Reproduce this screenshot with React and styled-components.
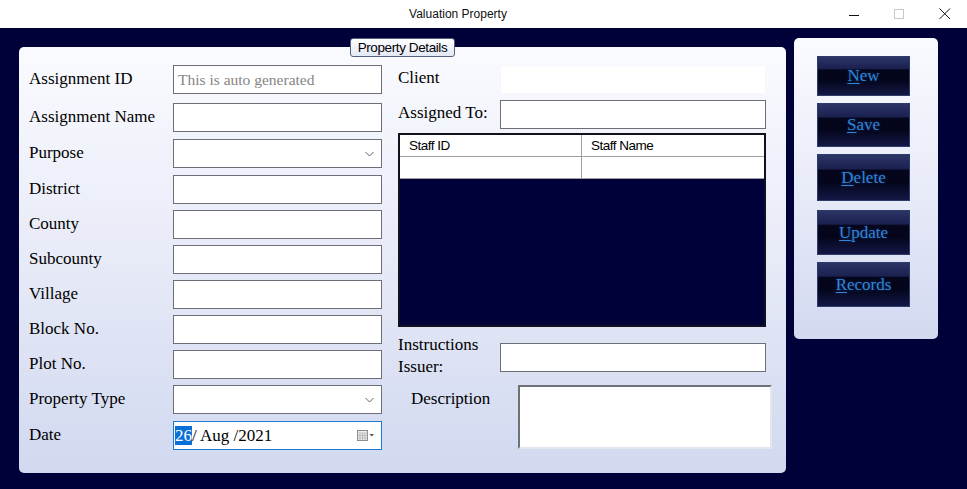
import React from "react";
import styled, { createGlobalStyle } from "styled-components";

const Global = createGlobalStyle`
  html, body { margin: 0; padding: 0; background: #01013a; }
  body { width: 967px; height: 489px; overflow: hidden; }
  * { box-sizing: border-box; }
`;

const serif = `"Liberation Serif", "Times New Roman", serif`;
const sans = `"Liberation Sans", Arial, sans-serif`;

const Window = styled.div`
  width: 967px;
  height: 489px;
  display: flex;
  flex-direction: column;
  background: #01013a;
`;

const TitleBar = styled.div`
  height: 28px;
  background: #ffffff;
  display: flex;
  align-items: center;
`;

const Title = styled.div`
  flex: 1;
  text-align: center;
  padding-left: 84px;
  font-family: ${sans};
  font-size: 12px;
  color: #111;
`;

const Controls = styled.div`
  display: flex;
  height: 28px;
`;

const Ctrl = styled.div`
  width: 45px;
  height: 28px;
  display: flex;
  align-items: center;
  justify-content: center;
`;

const Body = styled.div`
  flex: 1;
  display: flex;
  align-items: flex-start;
  padding: 10px 0 0 19px;
  gap: 8px;
`;

const MainPanel = styled.div`
  position: relative;
  margin-top: 9px;
  width: 767px;
  height: 426px;
  border-radius: 5px;
  background: linear-gradient(180deg, #fafbff 0%, #e9ecf8 45%, #d1d9f0 100%);
  display: flex;
  padding: 18px 0 0 10px;
`;

const Tab = styled.div`
  position: absolute;
  left: 331px;
  top: -9px;
  width: 105px;
  height: 19px;
  border: 1px solid #55607e;
  border-radius: 3px;
  background: linear-gradient(180deg, #ffffff, #e3e8f6);
  font-family: ${sans};
  font-size: 13.5px;
  line-height: 17px;
  text-align: center;
  color: #000;
  letter-spacing: -0.4px;
`;

const LeftCol = styled.div`
  width: 353px;
  display: flex;
  flex-direction: column;
  gap: 6px;
`;

const Row = styled.div`
  display: flex;
  align-items: flex-start;
  margin-top: ${(p) => p.$mt || 0}px;
  margin-bottom: ${(p) => p.$extra || 0}px;
`;

const Label = styled.div`
  width: ${(p) => p.$w || 144}px;
  padding-top: ${(p) => p.$pt ?? 5}px;
  padding-left: ${(p) => p.$pl || 0}px;
  margin-top: ${(p) => p.$mt || 0}px;
  margin-bottom: ${(p) => p.$mb || 0}px;
  font-family: ${serif};
  font-size: 17px;
  line-height: ${(p) => p.$lh || 18}px;
  color: #000;
  flex-shrink: 0;
`;

const Field = styled.div`
  width: ${(p) => p.$w || 209}px;
  height: ${(p) => p.$h || 29}px;
  background: #fff;
  border: 1px solid ${(p) => (p.$focus ? "#1a7ad6" : p.$none ? "#f6f7fb" : "#6e6e78")};
  display: flex;
  align-items: center;
  padding: 0 4px;
  font-family: ${serif};
  font-size: 17px;
  color: #000;
  position: relative;
`;

const Placeholder = styled.span`
  color: #858585;
  font-size: 15.5px;
`;

const Chevron = styled.svg`
  position: absolute;
  right: 7px;
  top: 11px;
`;

const Sel = styled.span`
  background: #0a6fd6;
  color: #fff;
  margin-left: -3px;
`;

const CalIcon = styled.svg`
  position: absolute;
  right: 6px;
  top: 8px;
`;

const RightCol = styled.div`
  margin-left: 16px;
  width: 374px;
  display: flex;
  flex-direction: column;
`;

const Grid = styled.div`
  margin-top: 4px;
  width: 368px;
  height: 194px;
  border: 2px solid #101020;
  background: #01013a;
  display: flex;
  flex-direction: column;
`;

const GridRow = styled.div`
  display: grid;
  grid-template-columns: 182px 1fr;
  height: 22px;
  background: #fff;
  border-bottom: 1px solid #a0a0a0;
`;

const Cell = styled.div`
  border-right: ${(p) => (p.$last ? "none" : "1px solid #a0a0a0")};
  padding-left: 9px;
  font-family: ${sans};
  font-size: 13.5px;
  line-height: 21px;
  letter-spacing: -0.5px;
  color: #000;
`;

const DescBox = styled.div`
  width: 254px;
  height: 64px;
  background: #fff;
  border-top: 2px solid #707078;
  border-left: 2px solid #707078;
  border-right: 2px solid #e4e6ee;
  border-bottom: 2px solid #e4e6ee;
`;

const SidePanel = styled.div`
  width: 144px;
  height: 301px;
  border-radius: 5px;
  background: linear-gradient(180deg, #fafbff 0%, #e8ebf8 50%, #d2d9f0 100%);
  padding: 18px 0 0 23px;
  display: flex;
  flex-direction: column;
`;

const Btn = styled.button`
  width: 93px;
  height: ${(p) => p.$h}px;
  margin-bottom: ${(p) => p.$mb}px;
  border: 1px solid #2d3c6a;
  background: linear-gradient(
    180deg,
    #2c3566 0%,
    #1b2150 30%,
    #05061c 34%,
    #04051a 60%,
    #131845 100%
  );
  color: #3084da;
  font-family: ${serif};
  font-size: 17px;
  font-weight: normal;
  padding: 0;
  display: flex;
  align-items: center;
  justify-content: center;
  cursor: pointer;
  text-shadow: 0 0 3px rgba(40, 110, 200, 0.45);
  u { text-decoration-thickness: 1px; text-underline-offset: 2px; }
`;

const leftRows = [
  ["Assignment ID", "ph", 3],
  ["Assignment Name", "", 1],
  ["Purpose", "select", 1],
  ["District", "", 0],
  ["County", "", 0],
  ["Subcounty", "", 0],
  ["Village", "", 0],
  ["Block No.", "", 0],
  ["Plot No.", "", 0],
  ["Property Type", "select", 1],
];

const buttons = [
  ["N", "ew", 40, 7],
  ["S", "ave", 44, 7],
  ["D", "elete", 47, 9],
  ["U", "pdate", 45, 7],
  ["R", "ecords", 45, 0],
];

const ChevronIcon = () => (
  <Chevron width="9" height="6" viewBox="0 0 9 6">
    <path d="M0.5 1 L4.5 5 L8.5 1" fill="none" stroke="#606068" strokeWidth="1" />
  </Chevron>
);

export default function App() {
  return (
    <>
      <Global />
      <Window>
        <TitleBar>
          <Title>Valuation Property</Title>
          <Controls>
            <Ctrl>
              <svg width="11" height="11" viewBox="0 0 11 11">
                <path d="M0 6.5 H10" stroke="#111" strokeWidth="1" />
              </svg>
            </Ctrl>
            <Ctrl>
              <svg width="11" height="11" viewBox="0 0 11 11">
                <rect x="0.5" y="0.5" width="9" height="9" fill="none" stroke="#c8c8c8" />
              </svg>
            </Ctrl>
            <Ctrl>
              <svg width="12" height="12" viewBox="0 0 12 12">
                <path d="M0.5 0.5 L11 11 M11 0.5 L0.5 11" stroke="#111" strokeWidth="1" />
              </svg>
            </Ctrl>
          </Controls>
        </TitleBar>
        <Body>
          <MainPanel>
            <Tab>Property Details</Tab>
            <LeftCol>
              {leftRows.map(([label, kind, extra]) => (
                <Row key={label} $extra={extra}>
                  <Label>{label}</Label>
                  <Field>
                    {kind === "ph" && <Placeholder>This is auto generated</Placeholder>}
                    {kind === "select" && <ChevronIcon />}
                  </Field>
                </Row>
              ))}
              <Row>
                <Label>Date</Label>
                <Field $focus>
                  <span>
                    <Sel>26</Sel>/ Aug /2021
                  </span>
                  <CalIcon width="18" height="11" viewBox="0 0 18 11">
                    <rect x="0.5" y="0.5" width="10" height="10" fill="#eee" stroke="#8a8a8a" />
                    <path d="M0.5 3 H10.5 M3 3 V10.5 M5.5 3 V10.5 M8 3 V10.5 M0.5 5.5 H10.5 M0.5 8 H10.5" stroke="#b0b0b0" strokeWidth="0.8" />
                    <path d="M12.5 4 L17 4 L14.75 6.5 Z" fill="#555" />
                  </CalIcon>
                </Field>
              </Row>
            </LeftCol>
            <RightCol>
              <Row>
                <Label $w={102} $pt={4}>Client</Label>
                <Field $w={266} $none />
              </Row>
              <Row $mt={6}>
                <Label $w={102} $pt={4}>Assigned To:</Label>
                <Field $w={266} />
              </Row>
              <Grid>
                <GridRow>
                  <Cell>Staff ID</Cell>
                  <Cell $last>Staff Name</Cell>
                </GridRow>
                <GridRow>
                  <Cell />
                  <Cell $last />
                </GridRow>
              </Grid>
              <Row $mt={16}>
                <Label $w={102} $pt={0} $lh={22} $mt={-9} $mb={-9}>
                  Instructions
                  <br />
                  Issuer:
                </Label>
                <Field $w={266} />
              </Row>
              <Row $mt={13}>
                <Label $w={120} $pt={5} $pl={13}>Description</Label>
                <DescBox />
              </Row>
            </RightCol>
          </MainPanel>
          <SidePanel>
            {buttons.map(([k, rest, h, mb]) => (
              <Btn key={k + rest} $h={h} $mb={mb}>
                <span>
                  <u>{k}</u>
                  {rest}
                </span>
              </Btn>
            ))}
          </SidePanel>
        </Body>
      </Window>
    </>
  );
}
